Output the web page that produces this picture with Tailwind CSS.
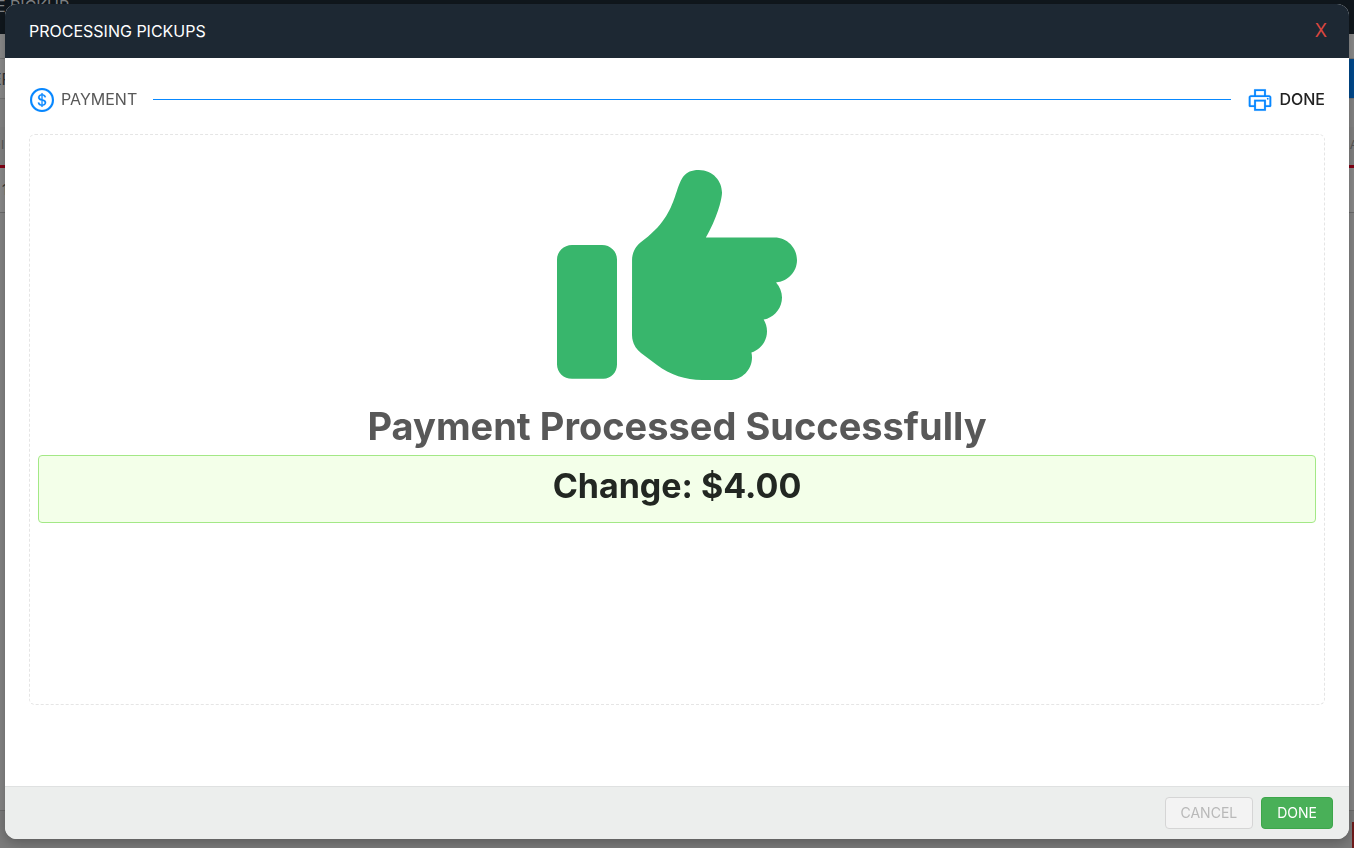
<!DOCTYPE html>
<html lang="en">
<head>
  <meta charset="UTF-8" />
  <meta name="viewport" content="width=device-width, initial-scale=1" />
  <title>Processing Pickups</title>
  <script src="https://cdn.jsdelivr.net/npm/@tailwindcss/browser@4"></script>
</head>
<body class="min-h-screen bg-[#858585] font-['Inter','Liberation_Sans',sans-serif] text-[#585858]">

  <!-- dimmed page behind the dialog -->
  <div class="fixed inset-0 flex flex-col overflow-hidden bg-[#858585] text-[#333]" aria-hidden="true">
    <div class="h-[34px] shrink-0 overflow-hidden bg-[#10171d] text-base leading-3 text-[#808386]"><span class="-ml-1">E PICKUP</span></div>
    <div class="h-[25px] shrink-0 border-b border-[#767676] bg-[#8b8b8b]"></div>
    <div class="flex h-10 shrink-0 items-center justify-between border-b border-[#767676] bg-[#8b8b8b]">
      <span class="-ml-2 text-base">ER</span>
      <span class="h-full w-24 bg-[#004a8d]"></span>
    </div>
    <div class="h-7 shrink-0 bg-[#858585]"></div>
    <div class="flex h-[41px] shrink-0 items-end justify-between border-b-3 border-[#850014] bg-[#828282] pb-3 pl-px text-xs text-[#555]">
      <span>I</span>
      <span class="-mr-1">A</span>
    </div>
    <div class="flex h-[45px] shrink-0 items-center border-b border-[#6c6c6c] bg-[#8b8b8b] pl-0.5 text-sm">1</div>
    <div class="grow"></div>
    <div class="flex h-[38px] shrink-0 items-end justify-end border-t border-[#6c6c6c] bg-[#7b7b7b]">
      <span class="h-[26px] w-[2px] bg-[#701b1b]"></span>
    </div>
  </div>

  <div class="relative flex min-h-screen flex-col px-[5px] pt-1 pb-[9px]">
    <div role="dialog" aria-labelledby="dialog-title" class="flex grow flex-col overflow-hidden rounded-xl bg-white shadow-[0_4px_12px_rgba(0,0,0,0.25)]">

      <!-- header -->
      <div class="flex h-[54px] items-center justify-between bg-[#1d2833] pr-5 pl-6">
        <h1 id="dialog-title" class="text-base font-normal text-white">PROCESSING PICKUPS</h1>
        <button type="button" aria-label="Close" class="flex size-4 items-center justify-center text-lg text-[#d9463f]">X</button>
      </div>

      <div class="flex grow flex-col px-6 pt-7">
        <!-- steps -->
        <ol class="flex h-[26px] items-center text-base">
          <li class="flex items-center gap-[7px]">
            <svg class="mt-0.5 ml-px size-6 fill-[#0888ff]" viewBox="64 64 896 896"><path d="M512 64C264.6 64 64 264.6 64 512s200.6 448 448 448 448-200.6 448-448S759.4 64 512 64zm0 820c-205.4 0-372-166.6-372-372s166.6-372 372-372 372 166.6 372 372-166.6 372-372 372zm47.7-395.2l-25.4-5.9V348.6c38 5.2 61.5 29 65.5 58.2.5 4 3.9 6.9 7.9 6.9h44.9c4.7 0 8.4-4.1 8-8.8-6.1-62.3-57.4-102.3-125.9-109.2V263c0-4.4-3.6-8-8-8h-28.1c-4.4 0-8 3.6-8 8v33c-70.8 6.9-126.2 46-126.2 119 0 67.6 49.8 100.2 102.1 112.7l24.7 6.3v142.7c-44.2-5.9-69-29.5-74.1-61.3-.6-3.8-4-6.6-7.9-6.6H363c-4.7 0-8.4 4-8 8.7 4.5 55 46.2 105.6 135.2 112.1V761c0 4.4 3.6 8 8 8h28.4c4.4 0 8-3.6 8-8.1l-.2-31.7c78.3-6.9 134.3-48.8 134.3-124-.1-69.4-44.2-100.4-109-116.4zm-68.6-16.2c-5.6-1.6-10.3-3.1-15-5-33.8-12.2-49.5-31.9-49.5-57.3 0-36.3 27.5-57 64.5-61.7v124zM534.3 677V543.3c3.1.9 5.9 1.6 8.8 2.2 47.3 14.4 63.2 34.4 63.2 65.1 0 39.1-29.4 62.6-72 66.4z" stroke="#0888ff" stroke-width="6" /></svg>
            <span>PAYMENT</span>
          </li>
          <li class="mx-4 h-px grow bg-[#0888ff]" aria-hidden="true"></li>
          <li class="flex items-center gap-[7px] font-medium text-[#222]" aria-current="step">
            <svg class="mt-0.5 ml-px size-6 fill-[#0888ff]" viewBox="64 64 896 896"><path d="M820 436h-40c-4.4 0-8 3.6-8 8v40c0 4.4 3.6 8 8 8h40c4.4 0 8-3.6 8-8v-40c0-4.4-3.6-8-8-8zm32-104H732V120c0-4.4-3.6-8-8-8H300c-4.4 0-8 3.6-8 8v212H172c-44.2 0-80 35.8-80 80v328c0 17.7 14.3 32 32 32h168v132c0 4.4 3.6 8 8 8h424c4.4 0 8-3.6 8-8V772h168c17.7 0 32-14.3 32-32V412c0-44.2-35.8-80-80-80zM360 180h304v152H360V180zm304 664H360V568h304v276zm200-140H732V500H292v204H160V412c0-6.6 5.4-12 12-12h680c6.6 0 12 5.4 12 12v292z" stroke="#0888ff" stroke-width="6" /></svg>
            <span>DONE</span>
          </li>
        </ol>

        <!-- result -->
        <div class="mt-[22px] mb-[81px] flex min-h-[570px] grow flex-col items-center rounded-md border border-dashed border-[#e5e5e5] px-2 pt-5">
          <svg class="size-60 fill-[#38b66c]" viewBox="0 0 512 512" aria-hidden="true"><path d="M128 447.1V223.1c0-17.67-14.33-31.1-32-31.1H32c-17.67 0-32 14.33-32 31.1v223.1c0 17.67 14.33 31.1 32 31.1h64C113.7 479.1 128 464.8 128 447.1zM512 224.1c0-26.5-21.48-47.98-48-47.98h-146.5c22.77-37.91 34.52-80.88 34.52-96.02C352 56.52 333.5 32 302.5 32c-63.13 0-26.36 76.15-108.2 141.6L178 186.6C166.2 196.1 160.2 210 160.1 224c-.0234 .0234 0 0 0 0L160 384c0 15.1 7.113 29.33 19.2 38.39l34.14 25.59C241 468.8 274.7 480 309.3 480H368c26.52 0 48-21.47 48-47.98c0-3.635-.4805-7.143-1.246-10.55C434 415.2 448 397.4 448 376c0-9.148-2.697-17.61-7.139-24.88C463.1 347 480 327.5 480 304.1c0-12.5-4.893-23.78-12.72-32.32C492.2 270.1 512 249.5 512 224.1z" /></svg>
          <h2 class="mt-1 mb-0.5 text-[38px] leading-[54px] font-bold">Payment Processed Successfully</h2>
          <div class="h-[68px] w-full rounded border border-[#a3e886] bg-[#f3ffe9] text-center text-[34px] leading-[60px] font-bold text-[#222722]">Change: $4.00</div>
        </div>
      </div>

      <!-- footer -->
      <div class="flex h-[53px] items-center justify-end gap-2 border-t border-[#dfe1e1] bg-[#eceeed] px-4">
        <button type="button" disabled class="h-8 rounded border border-[#d5d5d5] bg-[#f3f3f3] px-[15px] text-sm text-[#b9b9b9]">CANCEL</button>
        <button type="button" class="h-8 rounded border border-[#3da64b] bg-[#49b058] px-[15px] text-sm text-white">DONE</button>
      </div>
    </div>
  </div>
</body>
</html>
